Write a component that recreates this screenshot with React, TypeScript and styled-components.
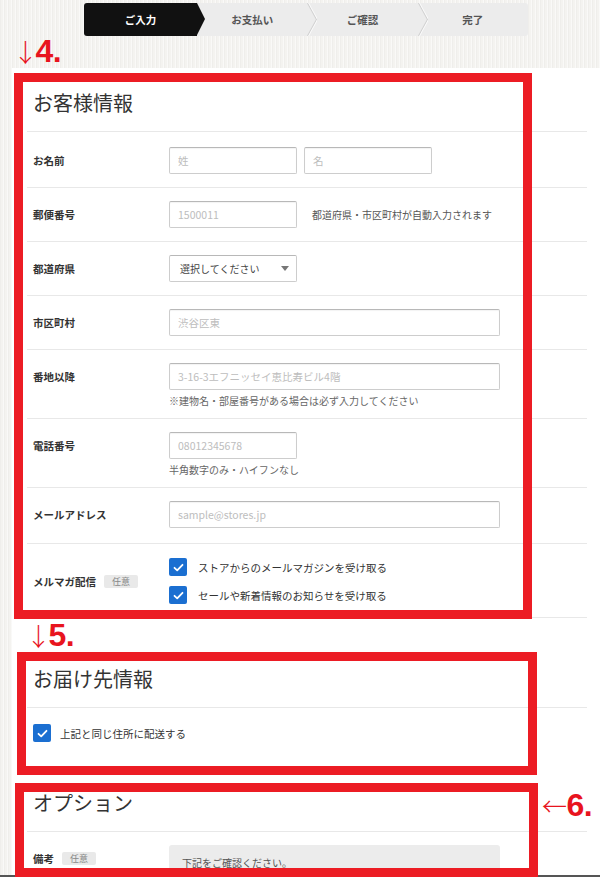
import React from 'react';
import styled, { createGlobalStyle, css } from 'styled-components';

const GlobalStyle = createGlobalStyle`
  html, body {
    margin: 0;
    padding: 0;
  }
  body {
    font-family: "Noto Sans CJK JP", "Noto Sans", sans-serif;
    color: #333;
    background: #f3f2ef;
  }
  * {
    box-sizing: border-box;
  }
`;

const Frame = styled.div`
  position: relative;
  display: flex;
  flex-direction: column;
  width: 600px;
  height: 877px;
  overflow: hidden;
  background-color: #f4f3f0;
  background-image: repeating-linear-gradient(
    90deg,
    rgba(0, 0, 0, 0.02) 0 1px,
    transparent 1px 3px,
    rgba(255, 255, 255, 0.5) 3px 4px
  );

  &::after {
    content: '';
    position: absolute;
    left: 0;
    right: 0;
    bottom: 0;
    height: 2px;
    background: #555;
    z-index: 1;
  }
`;

const TopBar = styled.div`
  height: 68px;
  padding: 3px 0 0 84px;
  flex-shrink: 0;
`;

const Stepper = styled.ol`
  display: flex;
  margin: 0;
  padding: 0;
  list-style: none;
  width: 444px;
  height: 33px;
  background: #ececec;
  border-radius: 3px;
`;

const Step = styled.li<{ $active?: boolean }>`
  position: relative;
  flex: 1;
  display: flex;
  align-items: center;
  justify-content: center;
  font-size: 10.5px;
  font-weight: 700;
  color: ${(p) => (p.$active ? '#fff' : '#555')};
  background: ${(p) => (p.$active ? '#111' : 'transparent')};
  border-radius: ${(p) => (p.$active ? '3px 0 0 3px' : '0')};

  ${(p) =>
    p.$active &&
    css`
      flex: 0 0 113px;
      &::after {
        content: '';
        position: absolute;
        top: 0;
        right: -8px;
        border-left: 8px solid #111;
        border-top: 16.5px solid transparent;
        border-bottom: 16.5px solid transparent;
        z-index: 1;
      }
    `}
`;

const Chevron = styled.svg`
  position: absolute;
  top: 0;
  right: -10px;
  width: 10px;
  height: 33px;
  z-index: 1;
`;

const Panel = styled.main`
  flex: 1;
  margin-left: 12px;
  padding: 5px 13px 0 15px;
  background: #fff;
`;

const Section = styled.section<{ $gap?: number }>`
  position: relative;
  margin-top: ${(p) => p.$gap ?? 0}px;
`;

const SectionHead = styled.h2`
  display: flex;
  align-items: center;
  height: 59px;
  margin: 0;
  padding-left: 6px;
  font-size: 20px;
  font-weight: 400;
  color: #333;
  border-bottom: 1px solid #e8e8e8;
`;

const Row = styled.div<{ $pt?: number; $pb?: number; $center?: boolean; $plain?: boolean }>`
  display: flex;
  align-items: ${(p) => (p.$center ? 'center' : 'flex-start')};
  padding: ${(p) => p.$pt ?? 13}px 0 ${(p) => p.$pb ?? 13}px 6px;
  border-bottom: ${(p) => (p.$plain ? 'none' : '1px solid #e8e8e8')};
`;

const Label = styled.div`
  display: flex;
  align-items: center;
  width: 136px;
  height: 27px;
  flex-shrink: 0;
  font-size: 10.5px;
  font-weight: 700;
  color: #333;
`;

const Badge = styled.span`
  display: inline-block;
  height: 13px;
  margin-left: 8px;
  padding: 0 8px;
  line-height: 13px;
  font-size: 9px;
  font-weight: 400;
  color: #888;
  background: #e9e9e9;
  border-radius: 2px;
`;

const Field = styled.div`
  display: flex;
  flex-direction: column;
`;

const Inline = styled.div`
  display: flex;
  align-items: center;
  gap: 7px;
`;

const Input = styled.input<{ $w: number }>`
  width: ${(p) => p.$w}px;
  height: 27px;
  padding: 0 8px;
  border: 1px solid #cdcdcd;
  border-top-color: #b8b8b8;
  border-radius: 2px;
  box-shadow: inset 0 1px 1px rgba(0, 0, 0, 0.05);
  font-family: inherit;
  font-size: 10.5px;
  color: #333;
  background: #fff;
  outline: none;

  &::placeholder {
    color: #bdbdbd;
  }
`;

const SelectBox = styled.div`
  display: flex;
  align-items: center;
  justify-content: space-between;
  width: 128px;
  height: 27px;
  padding: 0 7px 0 10px;
  border: 1px solid #cdcdcd;
  border-top-color: #b8b8b8;
  border-radius: 2px;
  font-size: 10px;
  color: #444;
`;

const Caret = styled.span`
  width: 0;
  height: 0;
  border-left: 4px solid transparent;
  border-right: 4px solid transparent;
  border-top: 5px solid #777;
`;

const SideNote = styled.span`
  margin-left: 8px;
  font-size: 10px;
  color: #555;
`;

const Hint = styled.div`
  margin-top: 4px;
  line-height: 13px;
  font-size: 10px;
  color: #666;
`;

const Checks = styled.div`
  display: flex;
  flex-direction: column;
  gap: 10px;
`;

const CheckRow = styled.label<{ $gap?: number }>`
  display: flex;
  align-items: center;
  gap: ${(p) => p.$gap ?? 11}px;
  font-size: 10.5px;
  color: #333;
`;

const Box = styled.span`
  display: flex;
  align-items: center;
  justify-content: center;
  width: 18px;
  height: 18px;
  border-radius: 2px;
  background: #1b6fd1;
`;

const Note = styled.textarea`
  width: 331px;
  height: 60px;
  padding: 11px 13px;
  border: none;
  border-radius: 3px;
  background: #ececec;
  font-family: inherit;
  font-size: 10px;
  line-height: 14px;
  color: #555;
  resize: none;
`;

const Highlight = styled.div<{ $top: number; $left: number; $w: number; $h: number }>`
  position: absolute;
  top: ${(p) => p.$top}px;
  left: ${(p) => p.$left}px;
  width: ${(p) => p.$w}px;
  height: ${(p) => p.$h}px;
  border: 9px solid #ec1c24;
  pointer-events: none;
  z-index: 2;
`;

const Marker = styled.div<{ $top: number; $left: number }>`
  position: absolute;
  top: ${(p) => p.$top}px;
  left: ${(p) => p.$left}px;
  display: flex;
  align-items: baseline;
  white-space: nowrap;
  font-family: "Liberation Sans", Arial, sans-serif;
  font-size: 32px;
  line-height: 32px;
  font-weight: 700;
  letter-spacing: -0.5px;
  color: #e8141e;
  z-index: 2;
`;

const Arrow = styled.span<{ $trim?: number }>`
  font-family: "Noto Sans CJK JP", sans-serif;
  font-size: 25px;
  font-weight: 300;
  margin-left: ${(p) => -(p.$trim ?? 0)}px;
  margin-right: ${(p) => (p.$trim ? -2 : 0)}px;
`;

const Check = () => (
  <Box>
    <svg width="11" height="9" viewBox="0 0 11 9">
      <polyline points="1.5,4.8 4.2,7.3 9.5,1.8" fill="none" stroke="#fff" strokeWidth="1.8" strokeLinecap="round" strokeLinejoin="round" />
    </svg>
  </Box>
);

const steps = ['ご入力', 'お支払い', 'ご確認', '完了'];

const App = () => {
  return (
    <>
      <GlobalStyle />
      <Frame>
        <TopBar>
          <Stepper>
            {steps.map((s, i) => (
              <Step key={s} $active={i === 0}>
                {s}
                {i > 0 && i < steps.length - 1 && (
                  <Chevron viewBox="0 0 10 33">
                    <polyline points="0.5,0 9.5,16.5 0.5,33" fill="none" stroke="#d2d2d2" strokeWidth="1.2" />
                    <polyline points="1.6,0 10.6,16.5 1.6,33" fill="none" stroke="#fafafa" strokeWidth="1" />
                  </Chevron>
                )}
              </Step>
            ))}
          </Stepper>
        </TopBar>

        <Panel>
          <Section>
            <Marker $top={-38} $left={-8}>
              <Arrow $trim={6}>↓</Arrow>
              <span>4.</span>
            </Marker>
            <Highlight $top={0} $left={-13} $w={518} $h={546} />
            <SectionHead>お客様情報</SectionHead>
            <Row $pt={15}>
              <Label>お名前</Label>
              <Inline>
                <Input $w={128} placeholder="姓" />
                <Input $w={128} placeholder="名" />
              </Inline>
            </Row>
            <Row>
              <Label>郵便番号</Label>
              <Inline>
                <Input $w={128} placeholder="1500011" />
                <SideNote>都道府県・市区町村が自動入力されます</SideNote>
              </Inline>
            </Row>
            <Row>
              <Label>都道府県</Label>
              <SelectBox>
                選択してください
                <Caret />
              </SelectBox>
            </Row>
            <Row>
              <Label>市区町村</Label>
              <Input $w={331} placeholder="渋谷区東" />
            </Row>
            <Row $pb={11}>
              <Label>番地以降</Label>
              <Field>
                <Input $w={331} placeholder="3-16-3エフニッセイ恵比寿ビル4階" />
                <Hint>※建物名・部屋番号がある場合は必ず入力してください</Hint>
              </Field>
            </Row>
            <Row $pb={11}>
              <Label>電話番号</Label>
              <Field>
                <Input $w={128} placeholder="08012345678" />
                <Hint>半角数字のみ・ハイフンなし</Hint>
              </Field>
            </Row>
            <Row $pb={15}>
              <Label>メールアドレス</Label>
              <Input $w={331} placeholder="sample@stores.jp" />
            </Row>
            <Row $pt={14} $pb={13} $center>
              <Label>
                メルマガ配信<Badge>任意</Badge>
              </Label>
              <Checks>
                <CheckRow>
                  <Check />
                  ストアからのメールマガジンを受け取る
                </CheckRow>
                <CheckRow>
                  <Check />
                  セールや新着情報のお知らせを受け取る
                </CheckRow>
              </Checks>
            </Row>
          </Section>

          <Section $gap={31}>
            <Marker $top={-30} $left={5}>
              <Arrow $trim={6}>↓</Arrow>
              <span>5.</span>
            </Marker>
            <Highlight $top={3} $left={-10} $w={520} $h={123} />
            <SectionHead>お届け先情報</SectionHead>
            <Row $pt={16} $pb={31} $plain>
              <CheckRow $gap={9}>
                <Check />
                上記と同じ住所に配送する
              </CheckRow>
            </Row>
          </Section>

          <Section>
            <Marker $top={16} $left={515}>
              <Arrow>←</Arrow>
              <span>6.</span>
            </Marker>
            <Highlight $top={10} $left={-12} $w={523} $h={94} />
            <SectionHead>オプション</SectionHead>
            <Row>
              <Label>
                備考<Badge>任意</Badge>
              </Label>
              <Note readOnly defaultValue="下記をご確認ください。" />
            </Row>
          </Section>
        </Panel>
      </Frame>
    </>
  );
};

export default App;
